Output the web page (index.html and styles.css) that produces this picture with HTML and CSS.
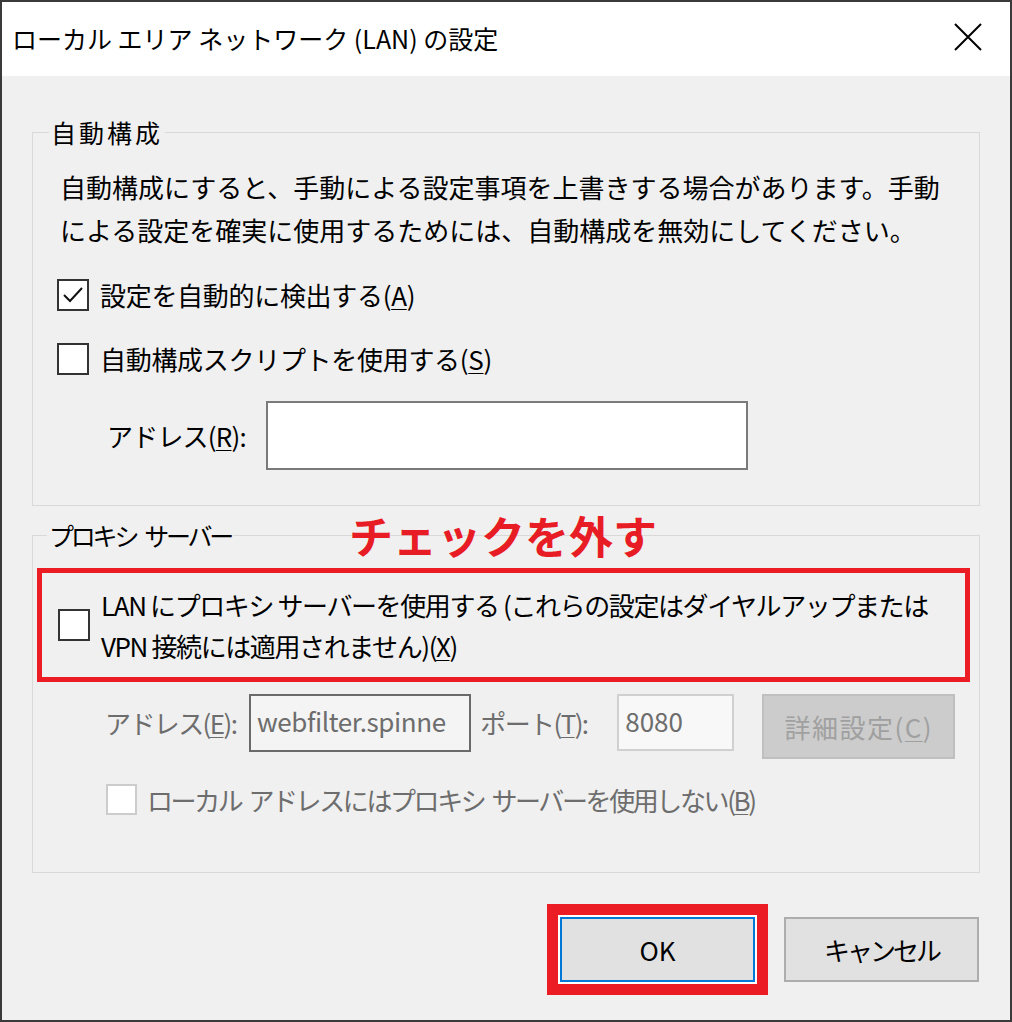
FILE: index.html
```html
<!DOCTYPE html>
<html lang="ja">
<head>
    <meta charset="UTF-8">
    <title>ローカル エリア ネットワーク (LAN) の設定</title>
    <link rel="stylesheet" href="styles.css">
</head>
<body>
    <div class="dialog">
        <div class="titlebar">
            <span class="title">ローカル エリア ネットワーク (LAN) の設定</span>
            <svg class="close" width="30" height="30" viewBox="0 0 30 30">
                <path d="M2 2 L28 28 M28 2 L2 28" stroke="#000" stroke-width="2" fill="none"/>
            </svg>
        </div>

        <div class="content">
            <fieldset class="group">
                <legend class="auto-legend">自動構成</legend>
                <p class="desc">自動構成にすると、手動による設定事項を上書きする場合があります。手動<br>による設定を確実に使用するためには、自動構成を無効にしてください。</p>

                <div class="check-row">
                    <span class="box">
                        <svg width="28" height="28" viewBox="0 0 28 28">
                            <path d="M5 14 L11 20 L23 7" stroke="#111" stroke-width="2" fill="none"/>
                        </svg>
                    </span>
                    <span class="label">設定を自動的に検出する(<u>A</u>)</span>
                </div>
                <div class="check-row second">
                    <span class="box"></span>
                    <span class="label">自動構成スクリプトを使用する(<u>S</u>)</span>
                </div>

                <div class="script-row">
                    <span class="field-label">アドレス(<u>R</u>):</span>
                    <span class="textbox"></span>
                </div>
            </fieldset>

            <fieldset class="group proxy">
                <legend class="proxy-legend">プロキシ<span class="sp">サーバー</span></legend>
                <span class="callout">チェックを外す</span>

                <div class="highlight">
                    <span class="box"></span>
                    <span class="label narrow">LAN にプロキシ サーバーを使用する (これらの設定はダイヤルアップまたは<br>VPN 接続には適用されません)(<u>X</u>)</span>
                </div>

                <div class="proxy-row">
                    <span class="dim-label addr">アドレス(<u>E</u>):</span>
                    <span class="textbox dim-addr">webfilter.spinne</span>
                    <span class="dim-label port-label">ポート(<u>T</u>):</span>
                    <span class="textbox dim-port">8080</span>
                    <span class="btn-disabled">詳細設定(<u>C</u>)</span>
                </div>

                <div class="check-row local">
                    <span class="box disabled"></span>
                    <span class="dim-label local-label">ローカル<span class="sp">アドレスにはプロキシ</span><span class="sp">サーバーを使用しない(<u>B</u>)</span></span>
                </div>
            </fieldset>

            <div class="buttons">
                <div class="ok-mark">
                    <span class="btn default">OK</span>
                </div>
                <span class="btn cancel">キャンセル</span>
            </div>
        </div>
    </div>
</body>
</html>
```

FILE: styles.css
```css
html, body {
    margin: 0;
    padding: 0;
    background-color: #ffffff;
}
body {
    font-family: "Noto Sans CJK JP", "Noto Sans", sans-serif;
    color: #000000;
}
u {
    text-decoration-thickness: 1px;
    text-underline-offset: 3px;
}
.sp {
    margin-left: 8px;
}
.dialog {
    width: 1012px;
    height: 1022px;
    box-sizing: border-box;
    border: 2px solid #3a3a3a;
    display: flex;
    flex-direction: column;
    background-color: #f0f0f0;
}
.titlebar {
    height: 74px;
    background-color: #ffffff;
    display: flex;
    align-items: center;
    justify-content: space-between;
    padding: 0 27px 0 10px;
}
.title {
    font-size: 25px;
    letter-spacing: 0;
    margin-top: -2px;
}
.close {
    margin-top: -4px;
}
.content {
    flex: 1;
    padding: 0 30px;
}
.group {
    position: relative;
    margin: 41px 0 0 0;
    padding: 18px 24px 35px 24px;
    border: 1px solid #d9d9d9;
    min-width: 0;
}
.group legend {
    font-size: 25px;
    line-height: 30px;
    padding: 0 2px;
}
.auto-legend {
    margin-left: -8px;
    letter-spacing: 3px;
}
.desc {
    margin: 0 0 28px 3px;
    font-size: 26px;
    line-height: 43px;
}
.check-row {
    display: flex;
    align-items: center;
    height: 32px;
}
.check-row.second {
    margin-top: 32px;
}
.box {
    width: 32px;
    height: 32px;
    box-sizing: border-box;
    border: 2px solid #333333;
    background-color: #ffffff;
    display: flex;
    align-items: center;
    justify-content: center;
    flex-shrink: 0;
}
.box.disabled {
    border-color: #cccccc;
    width: 31px;
    height: 31px;
}
.label {
    margin-left: 11px;
    font-size: 26px;
    line-height: 40px;
    letter-spacing: -0.3px;
}
.script-row {
    display: flex;
    align-items: center;
    margin-top: 26px;
    padding-left: 50px;
}
.field-label {
    font-size: 26px;
    width: 159px;
    letter-spacing: -0.8px;
}
.textbox {
    display: block;
    box-sizing: border-box;
    width: 482px;
    height: 69px;
    border: 2px solid #7a7a7a;
    background-color: #ffffff;
}

/* proxy group */
.group.proxy {
    margin-top: 14px;
    padding-bottom: 57px;
}
.proxy-legend {
    margin-left: -10px;
    letter-spacing: -3.2px;
}
.callout {
    position: absolute;
    left: 316px;
    top: -37px;
    font-size: 44px;
    font-weight: bold;
    color: #e81c24;
    line-height: 1;
}
.highlight {
    display: flex;
    align-items: center;
    margin: 0 -15px 0 -20px;
    padding: 11px 0 11px 16px;
    border: 5px solid #ec1c24;
}
.narrow {
    letter-spacing: -1.4px;
    line-height: 41px;
}
.proxy-row {
    display: flex;
    align-items: flex-start;
    margin-top: 12px;
}
.dim-label {
    color: #6d6d6d;
    font-size: 26px;
}
.dim-label.addr {
    margin: 10px 0 0 48px;
    width: 145px;
    letter-spacing: -1.6px;
}
.textbox.dim-addr {
    width: 224px;
    height: 58px;
    border-color: #6a6a6a;
    background-color: #f4f4f4;
    color: #6d6d6d;
    font-size: 26px;
    line-height: 50px;
    padding-left: 6px;
    overflow: hidden;
    white-space: nowrap;
    letter-spacing: -0.4px;
}
.port-label {
    margin: 10px 0 0 9px;
    width: 138px;
    letter-spacing: -1.6px;
}
.textbox.dim-port {
    width: 118px;
    height: 57px;
    border-color: #d0d0d0;
    background-color: #f8f8f8;
    color: #6d6d6d;
    font-size: 26px;
    line-height: 49px;
    padding-left: 6px;
}
.btn-disabled {
    margin-left: 28px;
    width: 194px;
    height: 65px;
    box-sizing: border-box;
    border: 2px solid #bfbfbf;
    background-color: #cccccc;
    color: #a0a0a0;
    font-size: 26px;
    letter-spacing: 1.5px;
    display: flex;
    align-items: center;
    justify-content: center;
}
.check-row.local {
    margin-top: 25px;
    padding-left: 49px;
    height: 31px;
}
.local-label {
    margin-left: 10px;
    letter-spacing: -2.4px;
}
.local-label .sp {
    margin-left: 7px;
}

/* dialog buttons */
.buttons {
    display: flex;
    justify-content: flex-end;
    align-items: center;
    gap: 16px;
    margin-top: 31px;
    padding-right: 1px;
}
.ok-mark {
    border: 11px solid #ec1c24;
    padding: 2px;
    background-color: #ffffff;
}
.btn {
    display: flex;
    align-items: center;
    justify-content: center;
    width: 195px;
    height: 65px;
    box-sizing: border-box;
    border: 2px solid #adadad;
    background-color: #e1e1e1;
    font-size: 26px;
}
.btn.default {
    border-color: #0078d7;
}
.btn.cancel {
    letter-spacing: -3px;
}
```
